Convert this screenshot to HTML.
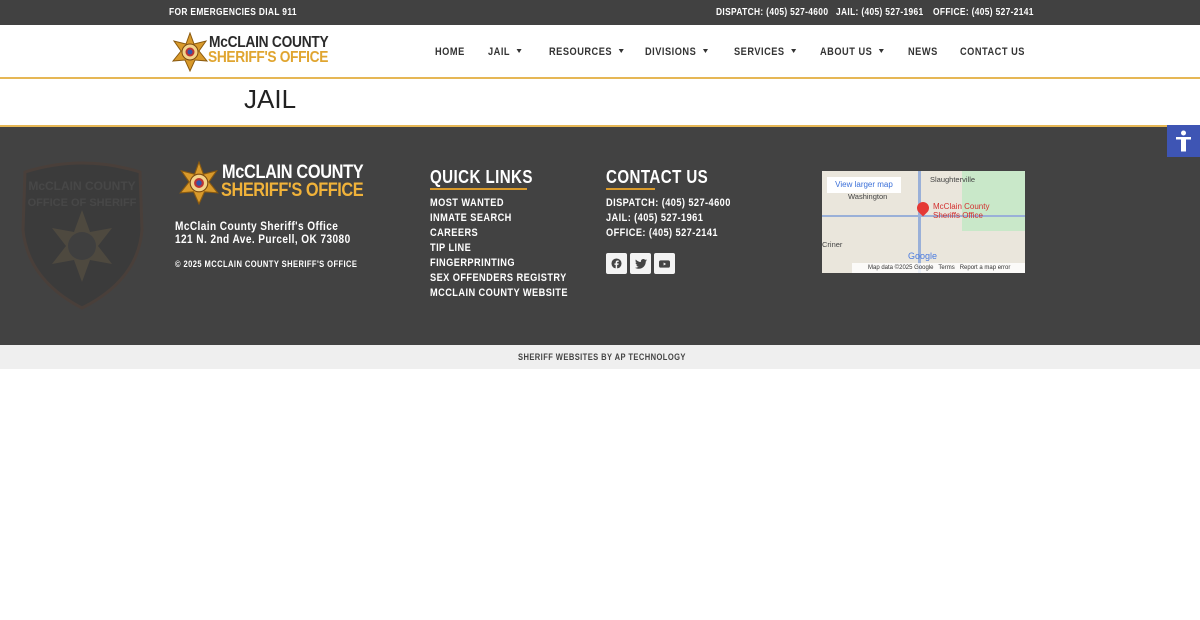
<!DOCTYPE html>
<html><head><meta charset="utf-8"><style>
*{margin:0;padding:0;box-sizing:border-box}
body{width:1200px;height:620px;background:#fff;font-family:"Liberation Sans",sans-serif;position:relative;overflow:hidden}
.a{position:absolute}
.s{transform:scaleX(.84);transform-origin:left top;white-space:nowrap}
.top{left:0;top:0;width:1200px;height:25px;background:#414141;color:#fff;font-size:10px;font-weight:bold;letter-spacing:.4px}
.hdr{left:0;top:25px;width:1200px;height:54px;background:#fff;border-bottom:2px solid #e6b755}
.nav{top:46px;font-size:11px;font-weight:bold;color:#333;letter-spacing:.6px}
.car{display:inline-block;width:0;height:0;border-left:3.5px solid transparent;border-right:3.5px solid transparent;border-top:4px solid #333;margin-left:8px;vertical-align:2px}
.ttl{left:244px;top:84px;font-size:26px;color:#222}
.band{left:0;top:125px;width:1200px;height:2px;background:#e6b755}
.foot{left:0;top:127px;width:1200px;height:218px;background:#424242}
.w{color:#fff;font-weight:bold;letter-spacing:.5px}
.bot{left:0;top:345px;width:1200px;height:24px;background:#efefef;font-size:9px;font-weight:bold;color:#444;line-height:24px;letter-spacing:.5px}
.ql{font-size:11px;line-height:15px}
.soc{width:21px;height:21px;background:#f3f3f3;border-radius:2px;display:flex;align-items:center;justify-content:center}
</style></head><body>
<div class="a top"><span class="a s" style="left:169px;top:7px">FOR EMERGENCIES DIAL 911</span><span class="a s" style="left:716px;top:7px">DISPATCH: (405) 527-4600</span><span class="a s" style="left:836px;top:7px">JAIL: (405) 527-1961</span><span class="a s" style="left:933px;top:7px">OFFICE: (405) 527-2141</span></div>
<div class="a hdr"></div>
<svg class="a" style="left:170px;top:32px" width="40" height="40" viewBox="0 0 40 40"><polygon points="20,1 24,12 36,9 29,19 37,29 25,28 20,39 15,28 3,29 11,19 4,9 16,12" fill="#d99a2b" stroke="#8a5a10" stroke-width="1"/><circle cx="20" cy="20" r="8" fill="#f3d38a" stroke="#7a4a10"/><circle cx="20" cy="20" r="4.5" fill="#b33"/><circle cx="20" cy="20" r="2.5" fill="#35a"/></svg>
<div class="a s" style="left:209px;top:35px;font-weight:bold;font-size:16px;color:#2b2b2b;line-height:16px;letter-spacing:-.3px;transform:scaleX(.86)">McCLAIN COUNTY</div>
<div class="a s" style="left:208px;top:50px;font-weight:bold;font-size:16px;color:#e0a530;line-height:16px;letter-spacing:-.4px;transform:scaleX(.86)">SHERIFF'S OFFICE</div>
<span class="a nav s" style="left:435px">HOME</span>
<span class="a nav s" style="left:488px">JAIL<i class="car"></i></span>
<span class="a nav s" style="left:549px">RESOURCES<i class="car"></i></span>
<span class="a nav s" style="left:645px">DIVISIONS<i class="car"></i></span>
<span class="a nav s" style="left:734px">SERVICES<i class="car"></i></span>
<span class="a nav s" style="left:820px">ABOUT US<i class="car"></i></span>
<span class="a nav s" style="left:908px">NEWS</span>
<span class="a nav s" style="left:960px">CONTACT US</span>
<div class="a ttl">JAIL</div>
<div class="a band"></div>
<div class="a foot"></div>
<svg class="a" style="left:20px;top:160px;opacity:.3" width="125" height="150" viewBox="0 0 125 150"><path d="M5,12 Q62,-6 120,12 L122,70 Q118,120 62,148 Q8,120 3,70 Z" fill="#2c2c2c" stroke="#5a3a2a" stroke-width="3"/><polygon points="62,50 70,72 92,68 78,86 92,104 70,100 62,122 54,100 32,104 46,86 32,68 54,72" fill="#6b5a3a"/><circle cx="62" cy="86" r="14" fill="#3a3a3a"/><text x="62" y="30" fill="#555" font-size="12" font-weight="bold" text-anchor="middle" font-family="Liberation Sans">McCLAIN COUNTY</text><text x="62" y="46" fill="#555" font-size="11" font-weight="bold" text-anchor="middle" font-family="Liberation Sans">OFFICE OF SHERIFF</text></svg>
<svg class="a" style="left:177px;top:161px" width="44" height="44" viewBox="0 0 40 40"><polygon points="20,1 24,12 36,9 29,19 37,29 25,28 20,39 15,28 3,29 11,19 4,9 16,12" fill="#d99a2b" stroke="#8a5a10" stroke-width="1"/><circle cx="20" cy="20" r="8" fill="#f3d38a" stroke="#7a4a10"/><circle cx="20" cy="20" r="4.5" fill="#b33"/><circle cx="20" cy="20" r="2.5" fill="#35a"/></svg>
<div class="a s" style="left:222px;top:164px;font-weight:bold;font-size:19px;color:#fff;line-height:18px;letter-spacing:-.4px;transform:scaleX(.86)">McCLAIN COUNTY</div>
<div class="a s" style="left:221px;top:182px;font-weight:bold;font-size:19px;color:#f0b23a;line-height:18px;letter-spacing:-.5px;transform:scaleX(.86)">SHERIFF'S OFFICE</div>
<div class="a w s" style="left:175px;top:220px;font-size:12px;line-height:12.5px;letter-spacing:.5px">McClain County Sheriff's Office<br>121 N. 2nd Ave. Purcell, OK 73080</div>
<div class="a w s" style="left:175px;top:259px;font-size:9px">© 2025 MCCLAIN COUNTY SHERIFF'S OFFICE</div>
<div class="a w s" style="left:430px;top:167px;font-size:18px">QUICK LINKS</div>
<div class="a" style="left:430px;top:188px;width:97px;height:2px;background:#d99a2b"></div>
<div class="a w ql s" style="left:430px;top:196px">MOST WANTED<br>INMATE SEARCH<br>CAREERS<br>TIP LINE<br>FINGERPRINTING<br>SEX OFFENDERS REGISTRY<br>MCCLAIN COUNTY WEBSITE</div>
<div class="a w s" style="left:606px;top:167px;font-size:18px">CONTACT US</div>
<div class="a" style="left:606px;top:188px;width:49px;height:2px;background:#d99a2b"></div>
<div class="a w ql s" style="left:606px;top:196px">DISPATCH: (405) 527-4600<br>JAIL: (405) 527-1961<br>OFFICE: (405) 527-2141</div>
<div class="a" style="left:606px;top:253px;display:flex;gap:3px">
<div class="soc"><svg width="11" height="11" viewBox="0 0 12 12"><circle cx="6" cy="6" r="5.5" fill="#444"/><path d="M6.7 12V7.5h1.4l.2-1.6H6.7V5c0-.5.1-.8.8-.8h.9V2.8c-.2 0-.7-.1-1.3-.1-1.2 0-2 .8-2 2.1v1.1H3.8v1.6h1.3V12z" fill="#f3f3f3"/></svg></div>
<div class="soc"><svg width="12" height="10" viewBox="0 0 24 20"><path d="M24 2.4c-.9.4-1.8.6-2.8.8 1-.6 1.8-1.6 2.2-2.7-1 .6-2 1-3.1 1.2C19.4.7 18.1 0 16.6 0c-2.7 0-4.9 2.2-4.9 4.9 0 .4 0 .8.1 1.1C7.7 5.8 4.1 3.9 1.7.9c-.4.7-.7 1.600-.7 2.5 0 1.7.9 3.2 2.2 4.1-.8 0-1.6-.2-2.2-.6v.1c0 2.4 1.7 4.4 3.9 4.8-.4.1-.8.2-1.3.2-.3 0-.6 0-.9-.1.6 2 2.4 3.4 4.6 3.4-1.7 1.3-3.8 2.1-6.1 2.1H0c2.2 1.4 4.8 2.2 7.5 2.2 9.1 0 14-7.5 14-14v-.6c1-.7 1.8-1.6 2.5-2.6z" fill="#444"/></svg></div>
<div class="soc"><svg width="11" height="8" viewBox="0 0 12 8"><rect width="12" height="8" rx="2" fill="#444"/><path d="M5 2.3v3.4L7.8 4z" fill="#f3f3f3"/></svg></div>
</div>
<div class="a" style="left:822px;top:171px;width:203px;height:102px;background:#eae6dc;overflow:hidden">
<div class="a" style="left:140px;top:0;width:63px;height:60px;background:#c9e8c9"></div>
<div class="a" style="left:0;top:44px;width:203px;height:2px;background:#9ab0d8"></div>
<div class="a" style="left:96px;top:0;width:3px;height:102px;background:#9ab0d8"></div>
<div class="a" style="left:5px;top:6px;width:74px;height:16px;background:#fff;font-size:8px;color:#3a6fd8;line-height:16px;text-align:center">View larger map</div>
<div class="a" style="left:108px;top:4px;font-size:7.5px;color:#444">Slaughterville</div>
<div class="a" style="left:26px;top:21px;font-size:7.5px;color:#444">Washington</div>
<div class="a" style="left:0;top:69px;font-size:7.5px;color:#444">Criner</div>
<div class="a" style="left:95px;top:31px;width:12px;height:12px;border-radius:50% 50% 50% 0;transform:rotate(-45deg);background:#e53935"></div>
<div class="a" style="left:111px;top:31px;font-size:8px;color:#d32f2f;line-height:9px">McClain County<br>Sheriffs Office</div>
<div class="a" style="left:86px;top:80px;font-size:9px;color:#4a7be0">Google</div>
<div class="a" style="left:30px;top:92px;width:173px;height:10px;background:rgba(255,255,255,.8);font-size:6px;color:#333;line-height:10px;padding-left:16px">Map data ©2025 Google &nbsp; Terms &nbsp; Report a map error</div>
</div>
<div class="a" style="left:1167px;top:125px;width:33px;height:32px;background:#3e55b4"><svg width="33" height="32" viewBox="0 0 33 32"><circle cx="16.5" cy="8" r="2.5" fill="#fff"/><path d="M9 12h15v2.5h-5v12h-2.5v-6h-0v6H14v-12H9z" fill="#fff"/></svg></div>
<div class="a bot"><span class="a s" style="left:518px;top:0">SHERIFF WEBSITES BY AP TECHNOLOGY</span></div>
</body></html>
